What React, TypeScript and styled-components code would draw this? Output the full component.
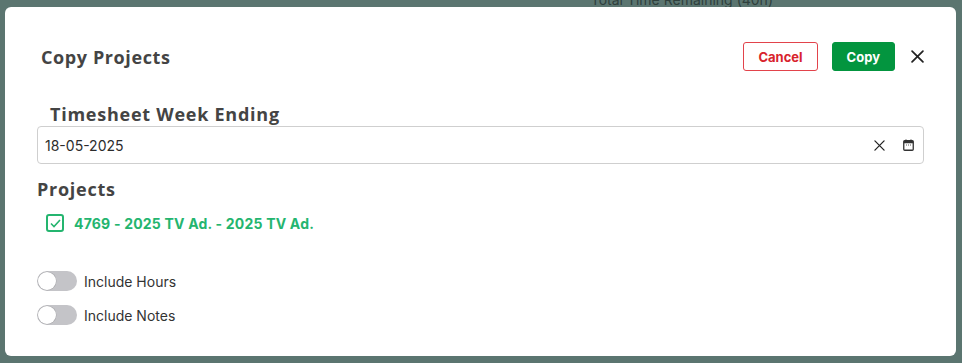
import React, { useState } from "react"
import styled, { createGlobalStyle } from "styled-components"

const GlobalStyle = createGlobalStyle`
  html, body {
    margin: 0;
    padding: 0;
    width: 962px;
    height: 363px;
    overflow: hidden;
    background: #5b7570;
  }
  * {
    box-sizing: border-box;
  }
`

const Page = styled.div`
  position: relative;
  width: 962px;
  height: 363px;
  background: #5b7570;
  font-family: Inter, "Liberation Sans", sans-serif;
  overflow: hidden;
`

const BehindText = styled.div`
  display: flex;
  justify-content: flex-end;
  padding-right: 189px;
  margin-top: -9px;
  font-size: 14px;
  color: #2f403d;
`

const Overlay = styled.div`
  position: absolute;
  inset: 0;
  display: flex;
  padding: 7px 6px 7px 5px;
`

const Modal = styled.div`
  flex: 1;
  background: #ffffff;
  border-radius: 6px;
  padding: 35px 32px 0 32px;
  display: flex;
  flex-direction: column;
`

const Header = styled.div`
  display: flex;
  align-items: center;
  height: 29px;
`

const Heading = styled.div`
  font-family: "Open Sans", sans-serif;
  font-weight: 700;
  font-size: 18px;
  line-height: 22px;
  letter-spacing: 0.75px;
  color: #444444;
`

const Title = styled(Heading)`
  flex: 1;
  margin-left: 4px;
  letter-spacing: 0.6px;
`

const Actions = styled.div`
  display: flex;
  align-items: center;
  gap: 14px;
`

interface ButtonProps {
  $variant: "outline" | "solid"
}

const Button = styled.button<ButtonProps>`
  height: 29px;
  padding: 0 14px;
  border-radius: 3px;
  font-family: Inter, "Liberation Sans", sans-serif;
  font-weight: 700;
  font-size: 13px;
  cursor: pointer;
  border: 1px solid ${p => (p.$variant === "outline" ? "#e2434b" : "#03953f")};
  background: ${p => (p.$variant === "outline" ? "#ffffff" : "#03953f")};
  color: ${p => (p.$variant === "outline" ? "#d8232d" : "#ffffff")};
`

const CloseButton = styled.button`
  width: 13px;
  height: 20px;
  margin-left: 16px;
  padding: 0;
  border: none;
  background: none;
  display: flex;
  align-items: center;
  justify-content: center;
  color: #222222;
`

const FieldLabel = styled(Heading)`
  margin: 32px 0 0 13px;
`

const DateInput = styled.div`
  margin-top: 1px;
  height: 38px;
  border: 1px solid #cfcfcf;
  border-radius: 4px;
  display: flex;
  align-items: center;
  padding: 0 9px 0 7px;
`

const DateValue = styled.span`
  flex: 1;
  font-size: 14px;
  color: #2c2c2c;
`

const InputIcons = styled.div`
  display: flex;
  align-items: center;
  gap: 18px;
  color: #222222;
`

const SectionTitle = styled(Heading)`
  margin-top: 14px;
`

const ProjectRow = styled.label`
  display: flex;
  align-items: center;
  gap: 10px;
  margin: 14px 0 0 9px;
  font-weight: 700;
  font-size: 14px;
  letter-spacing: 0.2px;
  color: #24b56f;
`

const CheckBox = styled.span`
  width: 18px;
  height: 18px;
  border: 2px solid #24b56f;
  border-radius: 3px;
  display: flex;
  align-items: center;
  justify-content: center;
`

const Toggles = styled.div`
  display: flex;
  flex-direction: column;
  gap: 14px;
  margin-top: 39px;
`

const ToggleRow = styled.label`
  display: flex;
  align-items: center;
  gap: 7px;
  font-size: 14px;
  color: #333333;
`

interface TrackProps {
  $on: boolean
}

const Track = styled.span<TrackProps>`
  position: relative;
  width: 40px;
  height: 20px;
  border-radius: 10px;
  background: ${p => (p.$on ? "#03953f" : "#c4c4c8")};
`

const Knob = styled.span<TrackProps>`
  position: absolute;
  top: 1px;
  left: ${p => (p.$on ? "21px" : "1px")};
  width: 18px;
  height: 18px;
  border-radius: 50%;
  background: #ffffff;
  box-shadow: 0 0 0 0.5px rgba(0, 0, 0, 0.15);
`

const Toggle: React.FC<{ label: string }> = ({ label }) => {
  const [on, setOn] = useState(false)
  return (
    <ToggleRow onClick={() => setOn(!on)}>
      <Track $on={on}>
        <Knob $on={on} />
      </Track>
      {label}
    </ToggleRow>
  )
}

const XIcon: React.FC<{ size: number; stroke: number }> = ({ size, stroke }) => (
  <svg width={size} height={size} viewBox="0 0 12 12" fill="none">
    <path d="M1 1 L11 11 M11 1 L1 11" stroke="currentColor" strokeWidth={stroke} strokeLinecap="round" />
  </svg>
)

const CalendarIcon = () => (
  <svg width="11" height="12" viewBox="0 0 11 12" fill="none">
    <rect x="0.75" y="1.75" width="9.5" height="9.5" rx="1" stroke="#333" strokeWidth="1.3" />
    <rect x="0.75" y="1.75" width="9.5" height="2.5" fill="#333" />
    <path d="M3 0.5 V2.5 M8 0.5 V2.5" stroke="#333" strokeWidth="1.2" />
    <path d="M3 6 H4 M5 6 H6 M7 6 H8" stroke="#333" strokeWidth="0.8" />
  </svg>
)

const App: React.FC = () => {
  return (
    <Page>
      <GlobalStyle />
      <BehindText>Total Time Remaining (40h)</BehindText>
      <Overlay>
        <Modal>
          <Header>
            <Title>Copy Projects</Title>
            <Actions>
              <Button $variant="outline">Cancel</Button>
              <Button $variant="solid">Copy</Button>
            </Actions>
            <CloseButton>
              <XIcon size={13} stroke={1.6} />
            </CloseButton>
          </Header>
          <FieldLabel>Timesheet Week Ending</FieldLabel>
          <DateInput>
            <DateValue>18-05-2025</DateValue>
            <InputIcons>
              <XIcon size={11} stroke={1.4} />
              <CalendarIcon />
            </InputIcons>
          </DateInput>
          <SectionTitle>Projects</SectionTitle>
          <ProjectRow>
            <CheckBox>
              <svg width="11" height="9" viewBox="0 0 11 9" fill="none">
                <path d="M1 4.5 L4 7.5 L10 1" stroke="#24b56f" strokeWidth="1.6" />
              </svg>
            </CheckBox>
            4769 - 2025 TV Ad. - 2025 TV Ad.
          </ProjectRow>
          <Toggles>
            <Toggle label="Include Hours" />
            <Toggle label="Include Notes" />
          </Toggles>
        </Modal>
      </Overlay>
    </Page>
  )
}

export default App
